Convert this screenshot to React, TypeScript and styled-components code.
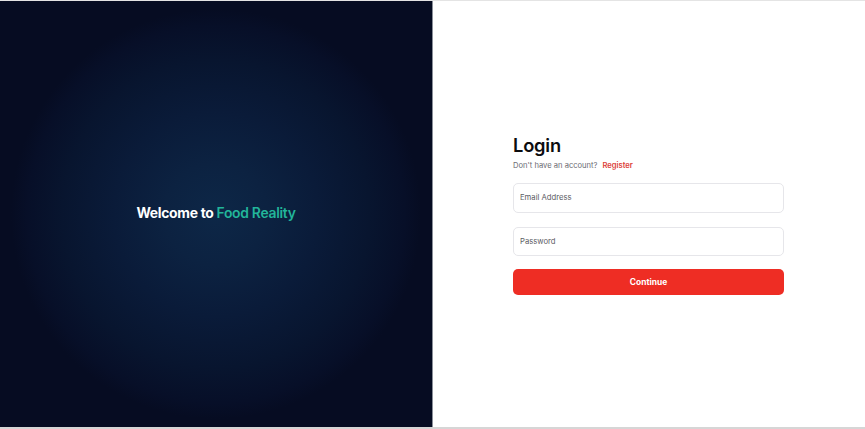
import React from "react";
import styled, { createGlobalStyle } from "styled-components";

const Global = createGlobalStyle`
  html, body { margin: 0; padding: 0; background: #ffffff; }
  body { font-family: Inter, "Noto Sans", sans-serif; }
  * { box-sizing: border-box; }
`;

const Page = styled.div`
  display: flex;
  width: 865px;
  height: 429px;
  border-top: 1px solid #e4e4e4;
  border-bottom: 2px solid #d6d6d6;
`;

const Hero = styled.section`
  width: 433px;
  flex: none;
  display: flex;
  align-items: center;
  justify-content: center;
  border-right: 1px solid #8a8f99;
  background: radial-gradient(
    circle 205px at 50% 50%,
    #0d2747 0%,
    #0c2241 25%,
    #0a1b39 50%,
    #08152f 75%,
    #070f28 92%,
    #060c22 100%
  );
`;

const HeroTitle = styled.h1`
  margin: 0 0 2px 0;
  font-family: Inter, "Noto Sans", sans-serif;
  font-weight: 700;
  font-size: 13.9px;
  letter-spacing: -0.3px;
  color: #ffffff;
`;

const Accent = styled.span`
  color: #22b59a;
  font-weight: 600;
`;

const FormSide = styled.section`
  flex: 1;
  display: flex;
  align-items: center;
  justify-content: flex-start;
  padding-left: 80px;
`;

const Form = styled.form`
  width: 271px;
  display: flex;
  flex-direction: column;
`;

const Title = styled.h2`
  margin: 0;
  font-family: Inter, "Noto Sans", sans-serif;
  font-size: 18.3px;
  font-weight: 600;
  letter-spacing: -0.2px;
  color: #0c0c0f;
  line-height: 22px;
`;

const Sub = styled.p`
  margin: 4px 0 0 0;
  font-size: 7.6px;
  color: #6b6b72;
  line-height: 11px;
`;

const Link = styled.a`
  color: #dc4139;
  font-weight: 600;
  margin-left: 5px;
  text-decoration: none;
`;

const Field = styled.input<{ $gap: number; $h: number }>`
  height: ${(p) => p.$h}px;
  width: 100%;
  border: 1px solid #e6e6ea;
  border-radius: 5px;
  padding: 0 6px;
  font-family: Inter, "Noto Sans", sans-serif;
  font-size: 7.7px;
  color: #333;
  background: #fff;
  outline: none;
  margin-top: ${(p) => p.$gap}px;
  &::placeholder { color: #5b5b63; }
`;

const Button = styled.button`
  margin-top: 13px;
  height: 26px;
  width: 100%;
  border: none;
  border-radius: 5px;
  background: #ee2d24;
  color: #ffffff;
  font-family: Inter, "Noto Sans", sans-serif;
  font-size: 8.4px;
  font-weight: 700;
  cursor: pointer;
`;

export default function App() {
  return (
    <>
      <Global />
      <Page>
        <Hero>
          <HeroTitle>
            Welcome to <Accent>Food Reality</Accent>
          </HeroTitle>
        </Hero>
        <FormSide>
          <Form onSubmit={(e) => e.preventDefault()}>
            <Title>Login</Title>
            <Sub>
              Don't have an account?<Link href="#">Register</Link>
            </Sub>
            <Field $gap={12} $h={30} placeholder="Email Address" />
            <Field $gap={14} $h={29} type="password" placeholder="Password" />
            <Button type="submit">Continue</Button>
          </Form>
        </FormSide>
      </Page>
    </>
  );
}
